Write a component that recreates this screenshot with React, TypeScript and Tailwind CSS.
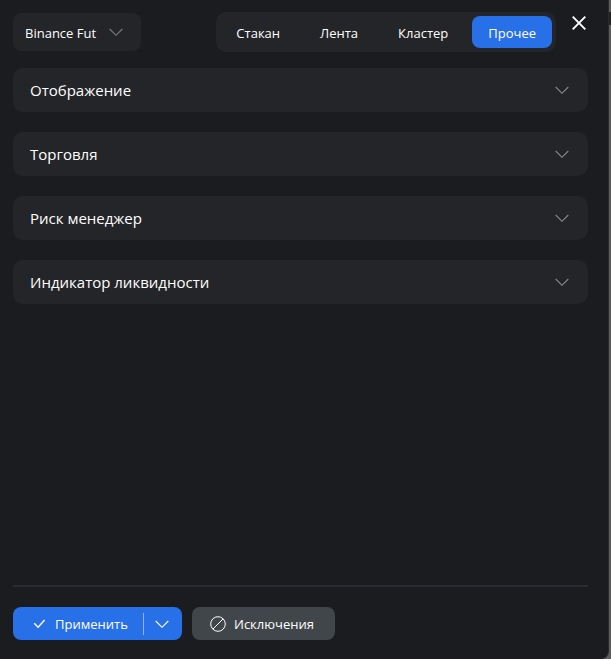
import { useState } from "react";

const tabs = ["Стакан", "Лента", "Кластер", "Прочее"];
const sections = ["Отображение", "Торговля", "Риск менеджер", "Индикатор ликвидности"];

function Chevron({ className }: { className: string }) {
  return (
    <svg aria-hidden="true" width="14" height="14" viewBox="0 0 14 14" fill="none" stroke="currentColor" strokeWidth="1.1" className={className}>
      <path d="M0.7 4 7 10.3 13.3 4" />
    </svg>
  );
}

function Header() {
  const [active, setActive] = useState("Прочее");
  return (
    <header className="flex items-start pl-[13px] pr-[22px]">
      <div className="mt-px grid h-[38px] w-32 items-center rounded-lg bg-[#242528]">
        <select
          aria-label="Биржа"
          className="col-start-1 row-start-1 h-full w-full appearance-none rounded-lg bg-transparent pl-3 pr-8 pt-[3px] text-[13px] text-white outline-none"
        >
          <option>Binance Fut</option>
        </select>
        <Chevron className="pointer-events-none col-start-1 row-start-1 mr-[18px] justify-self-end text-[#7c7d80]" />
      </div>
      <nav className="ml-auto flex gap-2 rounded-[10px] bg-[#242528] p-1">
        {tabs.map((tab) => (
          <button
            key={tab}
            type="button"
            aria-pressed={tab === active}
            onClick={() => setActive(tab)}
            className={`h-8 rounded-lg px-4 pt-[3px] text-[13px] ${tab === active ? "bg-[#2870e8]" : ""}`}
          >
            {tab}
          </button>
        ))}
      </nav>
      <button type="button" aria-label="Закрыть" className="ml-4 mt-1">
        <svg aria-hidden="true" width="14" height="14" viewBox="0 0 14 14" stroke="#fff" strokeWidth="1.9">
          <path d="m0.7 0.7 12.6 12.6M13.3 0.7 0.7 13.3" />
        </svg>
      </button>
    </header>
  );
}

export default function App() {
  return (
    <div className="flex min-h-screen bg-[#5c5c5c] font-['Open_Sans','Noto_Sans',sans-serif] text-white">
      <div className="flex grow flex-col rounded-br-lg border-r border-[#2b2b2e] bg-[#1b1c20] pt-3">
        <Header />
        <main className="mt-4 flex grow flex-col gap-5 pl-[13px] pr-5">
          {sections.map((title) => (
            <button
              key={title}
              type="button"
              aria-expanded="false"
              className="flex h-11 items-center justify-between rounded-[10px] bg-[#242528] pl-[17px] pr-[19px] text-[15px]"
            >
              {title}
              <Chevron className="text-[#88898c]" />
            </button>
          ))}
        </main>
        <footer className="ml-[13px] mr-5 flex gap-2.5 border-t-2 border-[#2b2c31] pb-[19px] pt-5 text-[13px]">
          <div className="flex h-[33px] items-center rounded-lg bg-[#2870e8]">
            <button type="button" className="flex h-full w-[130px] items-center gap-2 pl-5">
              <svg aria-hidden="true" width="14" height="14" viewBox="0 0 14 14" fill="none" stroke="currentColor" strokeWidth="1.4">
                <path d="m1.2 6.3 3.9 3.9 6.5-7.2" />
              </svg>
              <span className="pt-0.5">Применить</span>
            </button>
            <button type="button" aria-label="Другие действия" className="h-[22px] w-[39px] border-l border-[#8fb5f4] pl-[11px]">
              <Chevron className="" />
            </button>
          </div>
          <button type="button" className="flex h-[33px] w-[143px] items-center gap-2 rounded-lg bg-[#41464b] pl-[18px]">
            <svg aria-hidden="true" width="16" height="16" viewBox="0 0 16 16" fill="none" stroke="currentColor">
              <circle cx="8" cy="8" r="7.3" />
              <path d="M2.9 13.1 13.1 2.9" />
            </svg>
            <span className="pt-0.5">Исключения</span>
          </button>
        </footer>
      </div>
      <div aria-hidden="true" className="flex w-0.5 flex-col">
        <div className="mt-3 h-[13px] bg-[#222120]" />
      </div>
    </div>
  );
}
